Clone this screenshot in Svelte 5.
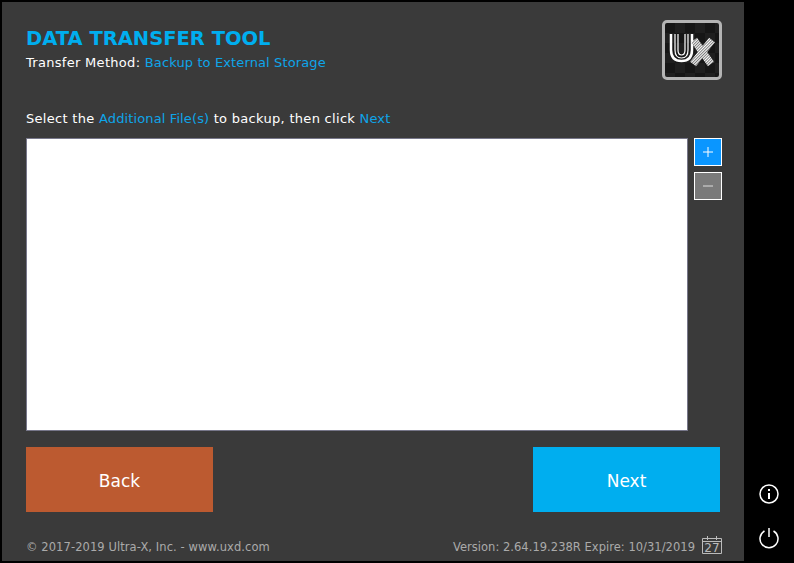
<script>
  let method = "Backup to External Storage";
</script>

<div class="screen">
  <main class="panel">
    <header class="top">
      <div>
        <h1>DATA TRANSFER TOOL</h1>
        <p class="method">Transfer Method: <span class="hl">{method}</span></p>
      </div>
      <div class="logo">
        <svg width="54" height="54" viewBox="0 0 54 54" fill="none">
          <defs>
            <pattern id="hatch" width="2" height="2" patternUnits="userSpaceOnUse" patternTransform="rotate(45)">
              <rect width="2" height="2" fill="#444" />
              <rect width="1.300" height="2" fill="#fff" />
            </pattern>
          </defs>
          <g stroke="#fff">
            <path d="M6 11V27C6 35 10 38 16.500 38C23 38 27 35 27 27V11" stroke-width="2.500" />
            <path d="M10 11V27C10 32 12 35 16.500 35C21 35 23 32 23 27V11" stroke-width="1.200" />
            <path d="M13 11V27C13 30 14 32 16.500 32C19 32 20 30 20 27V11" stroke-width="1.200" />
          </g>
          <g stroke="url(#hatch)" stroke-width="7.500">
            <path d="M29 17L46 41" />
            <path d="M47 17L28 41" />
          </g>
        </svg>
      </div>
    </header>

    <p class="hint">Select the <span class="hl">Additional File(s)</span> to backup, then click <span class="hl">Next</span></p>

    <div class="list-row">
      <div class="list"></div>
      <div class="side-btns">
        <button class="sq add" aria-label="Add">
          <svg width="10" height="10" viewBox="0 0 10 10"><path d="M0 5H10M5 0V10" stroke="#fff" stroke-width="1" fill="none" /></svg>
        </button>
        <button class="sq remove" aria-label="Remove">
          <svg width="10" height="10" viewBox="0 0 10 10"><path d="M0 5H10" stroke="#ddd" stroke-width="1" fill="none" /></svg>
        </button>
      </div>
    </div>

    <div class="actions">
      <button class="big back">Back</button>
      <button class="big next">Next</button>
    </div>

    <footer>
      <span class="copy">© 2017-2019 Ultra-X, Inc. - www.uxd.com</span>
      <span class="ver">
        <span class="ver-text">Version: 2.64.19.238R Expire: 10/31/2019</span>
        <svg class="cal" width="20" height="18" viewBox="0 0 20 18" fill="none" stroke="#bbb">
          <path d="M.5 2.500H19.500V17.500H.5ZM.5 5.500H19.500M5.500 0V4M14.500 0V4" />
          <text x="10" y="16" text-anchor="middle" fill="#bbb" stroke="none" font-size="12">27</text>
        </svg>
      </span>
    </footer>
  </main>

  <aside class="rail">
    <button class="rail-btn" aria-label="Info">
      <svg width="22" height="22" viewBox="0 0 22 22" fill="none" stroke="#fff" stroke-width="1.500">
        <circle cx="11" cy="11" r="9" />
        <path d="M11 10V16" stroke-width="2" />
        <path d="M11 6V8" stroke-width="2" />
      </svg>
    </button>
    <button class="rail-btn" aria-label="Power">
      <svg width="22" height="22" viewBox="0 0 22 22" fill="none" stroke="#fff" stroke-width="1.500">
        <path d="M6.500 4A9 9 0 1 0 15.500 4" />
        <path d="M11 1V10" />
      </svg>
    </button>
  </aside>
</div>

<style>
  :global(body) {
    background: #000;
  }

  .screen {
    width: 794px;
    height: 563px;
    display: flex;
    background: #000;
    font-family: "DejaVu Sans", sans-serif;
    overflow: hidden;
    box-sizing: border-box;
    padding: 2px 0 2px 2px;
  }

  .panel {
    width: 742px;
    height: 559px;
    background: #3a3a3a;
    box-sizing: border-box;
    padding: 18px 22px 0 24px;
    display: flex;
    flex-direction: column;
  }

  .top {
    display: flex;
    justify-content: space-between;
    align-items: flex-start;
    height: 91px;
  }

  h1 {
    margin: 7px 0 0;
    font-size: 19.500px;
    line-height: 24px;
    font-weight: bold;
    color: #00aeef;
  }

  .method, .hint {
    margin: 0;
    font-size: 13px;
    line-height: 16px;
    letter-spacing: 0.3px;
    color: #fff;
  }

  .method {
    margin-top: 4px;
  }

  .hl {
    color: #0ea5e9;
    letter-spacing: 0.12px;
  }

  .logo {
    width: 60px;
    height: 60px;
    box-sizing: border-box;
    border: 3px solid #b4b4b4;
    border-radius: 5px;
    background: repeating-conic-gradient(#1f1f1f 0 25%, #161616 0 50%) 0 0 / 20px 20px;
  }

  .logo svg {
    display: block;
  }

  .hint {
    height: 27px;
  }

  .list-row {
    display: flex;
    gap: 6px;
  }

  .list {
    width: 662px;
    height: 293px;
    box-sizing: border-box;
    background: #fff;
    border: 1px solid #77778a;
  }

  .side-btns {
    display: flex;
    flex-direction: column;
    gap: 6px;
  }

  .sq {
    width: 28px;
    height: 28px;
    padding: 0;
    border: 1px solid #fff;
    display: flex;
    align-items: center;
    justify-content: center;
  }

  .add {
    background: #0a96ff;
  }

  .remove {
    background: #7a7a7a;
  }

  .actions {
    display: flex;
    justify-content: space-between;
    width: 694px;
    margin-top: 16px;
  }

  .big {
    width: 187px;
    height: 65px;
    border: none;
    padding: 2px 0 0;
    color: #fff;
    font-family: inherit;
    font-size: 17px;
  }

  .back {
    background: #bc5a30;
  }

  .next {
    background: #00aeef;
  }

  footer {
    display: flex;
    justify-content: space-between;
    align-items: center;
    margin-top: 23px;
    font-size: 11.500px;
    letter-spacing: 0.08px;
    color: #aaa;
    height: 20px;
  }

  .copy, .ver-text {
    padding-top: 4px;
  }

  .ver-text {
    letter-spacing: 0.03px;
  }

  .ver {
    display: flex;
    align-items: center;
    gap: 7px;
  }

  .rail {
    flex: 1;
    display: flex;
    flex-direction: column;
    align-items: center;
    justify-content: flex-end;
    gap: 22px;
    padding-bottom: 12px;
  }

  .rail-btn {
    width: 22px;
    height: 22px;
    padding: 0;
    border: none;
    background: none;
  }
</style>
